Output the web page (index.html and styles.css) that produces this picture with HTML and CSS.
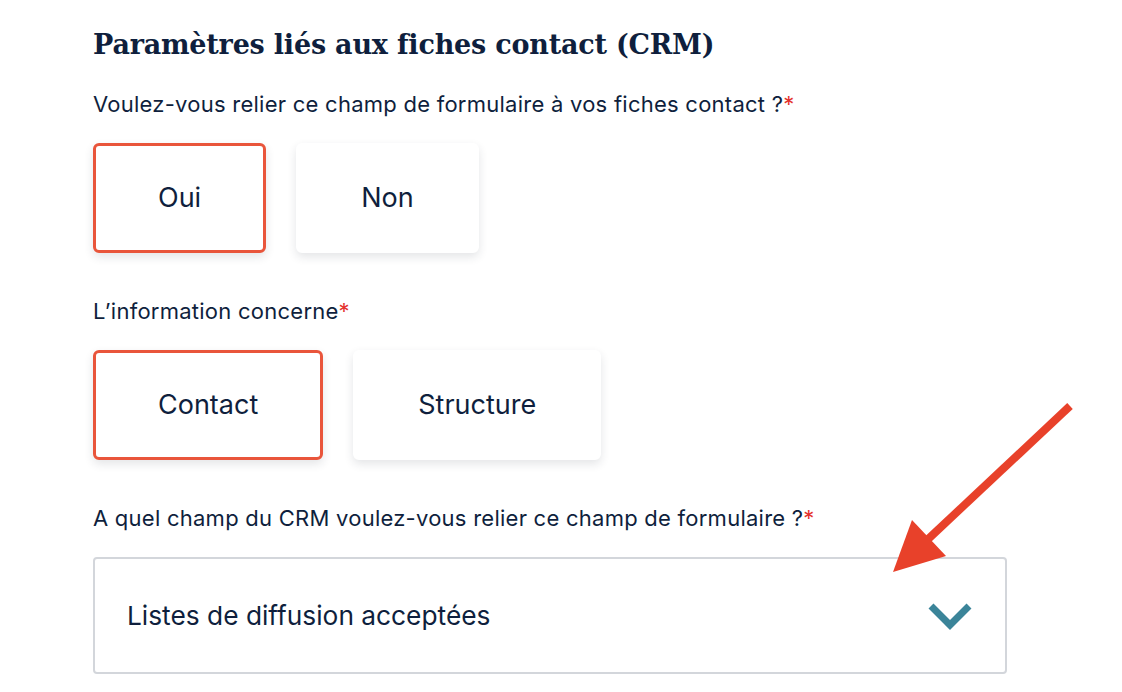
FILE: index.html
```html
<!DOCTYPE html>
<html lang="fr">
<head>
<meta charset="utf-8">
<title>Paramètres CRM</title>
<link rel="stylesheet" href="styles.css">
</head>
<body>
<main class="page">
  <h1 class="title">Paramètres liés aux fiches contact (CRM)</h1>

  <p class="label">Voulez-vous relier ce champ de formulaire à vos fiches contact ?<span class="req">*</span></p>
  <div class="choices">
    <button class="choice is-selected">Oui</button>
    <button class="choice">Non</button>
  </div>

  <p class="label">L’information concerne<span class="req">*</span></p>
  <div class="choices">
    <button class="choice is-selected">Contact</button>
    <button class="choice">Structure</button>
  </div>

  <p class="label">A quel champ du CRM voulez-vous relier ce champ de formulaire ?<span class="req">*</span></p>
  <div class="select">
    <span class="select-value">Listes de diffusion acceptées</span>
    <svg class="chevron" width="46" height="28" viewBox="0 0 46 28" aria-hidden="true">
      <polyline points="4,4 23,23 42,4" fill="none" stroke="#3b8499" stroke-width="7" stroke-linecap="butt" stroke-linejoin="miter"/>
    </svg>
  </div>

  <svg class="annotation" width="1122" height="692" viewBox="0 0 1122 692" aria-hidden="true">
    <line x1="1070" y1="406" x2="925" y2="542" stroke="#e8412a" stroke-width="8"/>
    <polygon points="893,572 912,520 946,556" fill="#e8412a"/>
  </svg>
</main>
</body>
</html>
```

FILE: styles.css
```css
html, body {
  margin: 0;
  padding: 0;
  background: #ffffff;
}

.page {
  position: relative;
  width: 1122px;
  height: 692px;
  box-sizing: border-box;
  padding: 27px 0 0 93px;
  color: #0f1f3d;
  font-family: Inter, Lato, "Noto Sans", sans-serif;
  overflow: hidden;
}

.title {
  margin: 0 0 29px;
  font-family: "DejaVu Serif", serif;
  font-weight: bold;
  font-size: 27px;
  line-height: 36px;
  letter-spacing: -0.2px;
  color: #0f1f3d;
}

.label {
  margin: 0 0 27px;
  font-size: 22px;
  line-height: 24px;
  letter-spacing: 0.25px;
}

.req {
  color: #e4312b;
}

.choices {
  display: flex;
  gap: 30px;
  margin-bottom: 46px;
}

.choice {
  font-family: inherit;
  font-size: 27px;
  line-height: 32px;
  color: #0f1f3d;
  background: #ffffff;
  border: 3px solid #ffffff;
  border-radius: 6px;
  padding: 36px 62px;
  box-shadow: 0 4px 10px rgba(30, 40, 60, 0.12);
  cursor: pointer;
}

.choice.is-selected {
  border-color: #e9553b;
}

.select {
  display: flex;
  align-items: center;
  justify-content: space-between;
  width: 914px;
  height: 117px;
  box-sizing: border-box;
  border: 2px solid #d3d6db;
  border-radius: 4px;
  padding: 0 32px 0 32px;
}

.select-value {
  font-size: 26.3px;
  line-height: 32px;
}

.chevron {
  display: block;
}

.annotation {
  position: absolute;
  left: 0;
  top: 0;
  pointer-events: none;
}
```
